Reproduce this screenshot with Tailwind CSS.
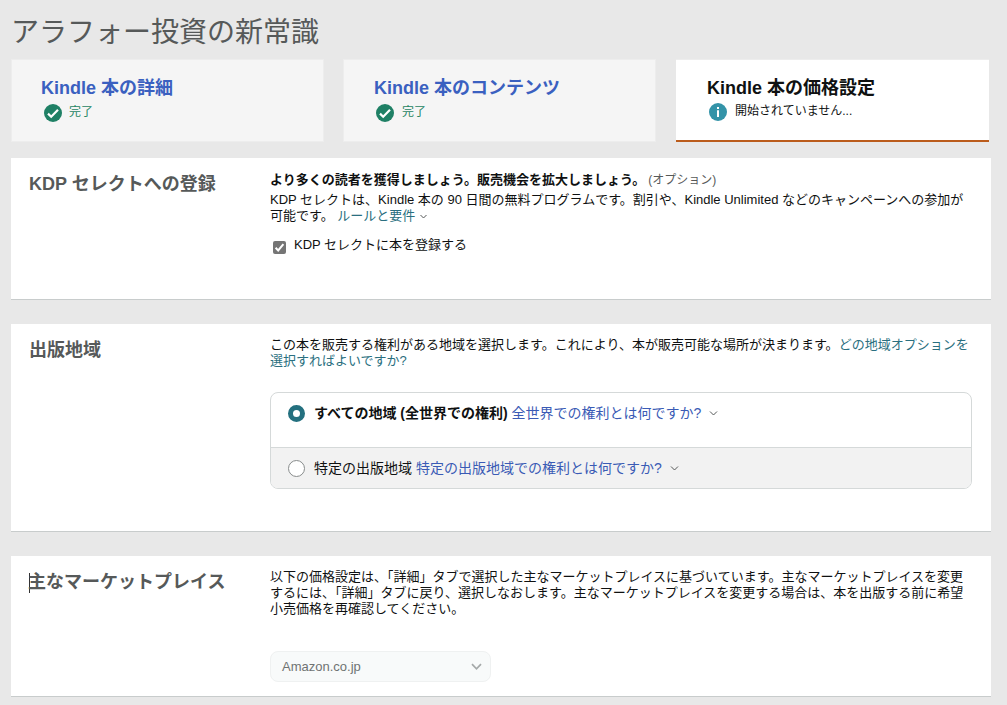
<!DOCTYPE html>
<html lang="ja">
<head>
    <meta charset="UTF-8">
    <meta name="viewport" content="width=device-width, initial-scale=1.0">
    <title>アラフォー投資の新常識</title>
    <script src="https://cdn.jsdelivr.net/npm/@tailwindcss/browser@4"></script>
</head>
<body class="bg-[#e8e8e8] h-[705px] overflow-hidden font-['Liberation_Sans','Noto_Sans_CJK_JP',sans-serif] text-[13px] leading-4 text-[#0f1111]">
    <h1 class="pl-[11px] pt-[13px] h-[59px] text-[28px] leading-10 text-[#565959] whitespace-nowrap">アラフォー投資の新常識</h1>

    <!-- Steps -->
    <nav class="flex gap-5 pl-[11px] h-[83px]">
        <a class="w-[313px] bg-[#f5f5f5] border border-[#ededed] pl-[29px] pt-4">
            <h2 class="text-lg leading-6 font-bold text-[#3a60c0]">Kindle 本の詳細</h2>
            <div class="flex items-center gap-[7px] pl-[3px] pt-1 text-xs text-[#1f8563]">
                <svg class="w-[18px] h-[18px]" viewBox="0 0 18 18"><circle cx="9" cy="9" r="9" fill="#1f8065"/><path d="M4 9.6l3.2 3.1L14 5.8" fill="none" stroke="#fff" stroke-width="2.2"/></svg>
                <span class="-mt-[2px]">完了</span>
            </div>
        </a>
        <a class="w-[313px] bg-[#f5f5f5] border border-[#ededed] pl-[30px] pt-4 -ml-px">
            <h2 class="text-lg leading-6 font-bold text-[#3a60c0]">Kindle 本のコンテンツ</h2>
            <div class="flex items-center gap-2 pl-[2px] pt-1 text-xs text-[#1f8563]">
                <svg class="w-[18px] h-[18px]" viewBox="0 0 18 18"><circle cx="9" cy="9" r="9" fill="#1f8065"/><path d="M4 9.6l3.2 3.1L14 5.8" fill="none" stroke="#fff" stroke-width="2.2"/></svg>
                <span class="-mt-[2px]">完了</span>
            </div>
        </a>
        <a class="w-[313px] bg-white border-t border-t-[#ededed] border-b-2 border-b-[#bb5c1c] pl-[31px] pt-4">
            <h2 class="text-lg leading-6 font-bold">Kindle 本の価格設定</h2>
            <div class="flex items-center gap-2 pl-[2px] pt-[3px] text-xs">
                <svg class="w-[18px] h-[18px]" viewBox="0 0 18 18"><circle cx="9" cy="9" r="9" fill="#3393a8"/><path d="M8 4h2v2H8zM8 7.2h2V14H8z" fill="#fff"/></svg>
                <span class="-mt-[2px]">開始されていません...</span>
            </div>
        </a>
    </nav>

    <main class="flex flex-col gap-6 pl-[11px] pt-4 w-[991px]">
        <!-- KDP Select -->
        <section class="flex h-[142px] bg-white border-b border-[#c8cccc]">
            <h2 class="w-[259px] shrink-0 pl-[18px] pt-[14px] text-lg leading-6 font-bold text-[#565959]">KDP セレクトへの登録</h2>
            <div class="pt-[14px] whitespace-nowrap">
                <p class="mb-[3px]"><b>より多くの読者を獲得しましょう。販売機会を拡大しましょう。</b><span class="ml-[3px] text-xs leading-4 text-[#565959]">(オプション)</span></p>
                <p class="pt-px">KDP セレクトは、Kindle 本の 90 日間の無料プログラムです。割引や、Kindle Unlimited などのキャンペーンへの参加が<br>可能です。 <a class="text-[#2a6f80]">ルールと要件</a><svg class="inline-block ml-1 w-[9px] h-[7px]" viewBox="0 0 9 7"><path d="M1.5 2l3 3 3-3" fill="none" stroke="#565959"/></svg></p>
                <label class="flex items-center mt-3 gap-2 pl-[3px]">
                    <svg class="w-[13px] h-[13px] mt-[5px]" viewBox="0 0 13 13"><rect width="13" height="13" rx="2" fill="#757575"/><path d="M2.6 6.8l2.6 2.7 5.2-6.3" fill="none" stroke="#fff" stroke-width="2"/></svg>
                    <span>KDP セレクトに本を登録する</span>
                </label>
            </div>
        </section>

        <!-- Territories -->
        <section class="flex h-[208px] bg-white border-b border-[#c8cccc]">
            <h2 class="w-[259px] shrink-0 pl-[18px] pt-[14px] text-lg leading-6 font-bold text-[#565959]">出版地域</h2>
            <div class="pt-[13px] whitespace-nowrap">
                <p>この本を販売する権利がある地域を選択します。これにより、本が販売可能な場所が決まります。<a class="text-[#2a6f80]">どの地域オプションを<br>選択すればよいですか?</a></p>
                <div class="mt-[23px] w-[702px] h-[97px] border border-[#d5d9d9] rounded-lg overflow-hidden text-sm leading-5">
                    <div class="flex h-[54px] pl-[17px] pt-[11px]">
                        <span class="mt-px w-[17px] h-[17px] rounded-full border-[5px] border-[#24707f] bg-white"></span>
                        <p class="ml-[9px] -mt-px"><b>すべての地域 (全世界での権利)</b> <a class="text-[#3a5bb5]">全世界での権利とは何ですか?</a><svg class="inline-block ml-2 -mt-px w-[9px] h-[7px]" viewBox="0 0 9 7"><path d="M1 1.5l3.5 3.5L8 1.5" fill="none" stroke="#565959"/></svg></p>
                    </div>
                    <div class="flex h-[41px] pl-[17px] pt-[11px] border-t border-[#d5d9d9] bg-[#f2f2f2]">
                        <span class="mt-px w-[17px] h-[17px] rounded-full border border-[#888c8c] bg-white"></span>
                        <p class="ml-[9px] -mt-px">特定の出版地域 <a class="text-[#3a5bb5]">特定の出版地域での権利とは何ですか?</a><svg class="inline-block ml-2 -mt-px w-[9px] h-[7px]" viewBox="0 0 9 7"><path d="M1 1.5l3.5 3.5L8 1.5" fill="none" stroke="#565959"/></svg></p>
                    </div>
                </div>
            </div>
        </section>

        <!-- Primary marketplace -->
        <section class="flex h-[141px] bg-white border-b border-[#c8cccc]">
            <h2 class="w-[259px] shrink-0 pl-[18px] pt-[14px] text-lg leading-6 font-bold text-[#565959]"><span class="inline-block align-middle -mr-[2px] w-px h-5 bg-[#333]"></span>主なマーケットプレイス</h2>
            <div class="pt-[13px] whitespace-nowrap">
                <p>以下の価格設定は、「詳細」タブで選択した主なマーケットプレイスに基づいています。主なマーケットプレイスを変更<br>するには、「詳細」タブに戻り、選択しなおします。主なマーケットプレイスを変更する場合は、本を出版する前に希望<br>小売価格を再確認してください。</p>
                <div class="flex items-center justify-between mt-[34px] w-[221px] h-[31px] pl-[11px] pr-2 bg-[#f8fafa] border border-[#eff1f1] rounded-lg text-[#6f7373]">
                    <span>Amazon.co.jp</span>
                    <svg class="w-[11px] h-[8px]" viewBox="0 0 11 8"><path d="M1 1.2l4.5 4.6L10 1.2" fill="none" stroke="#a5a9a9" stroke-width="1.7"/></svg>
                </div>
            </div>
        </section>
    </main>
</body>
</html>
